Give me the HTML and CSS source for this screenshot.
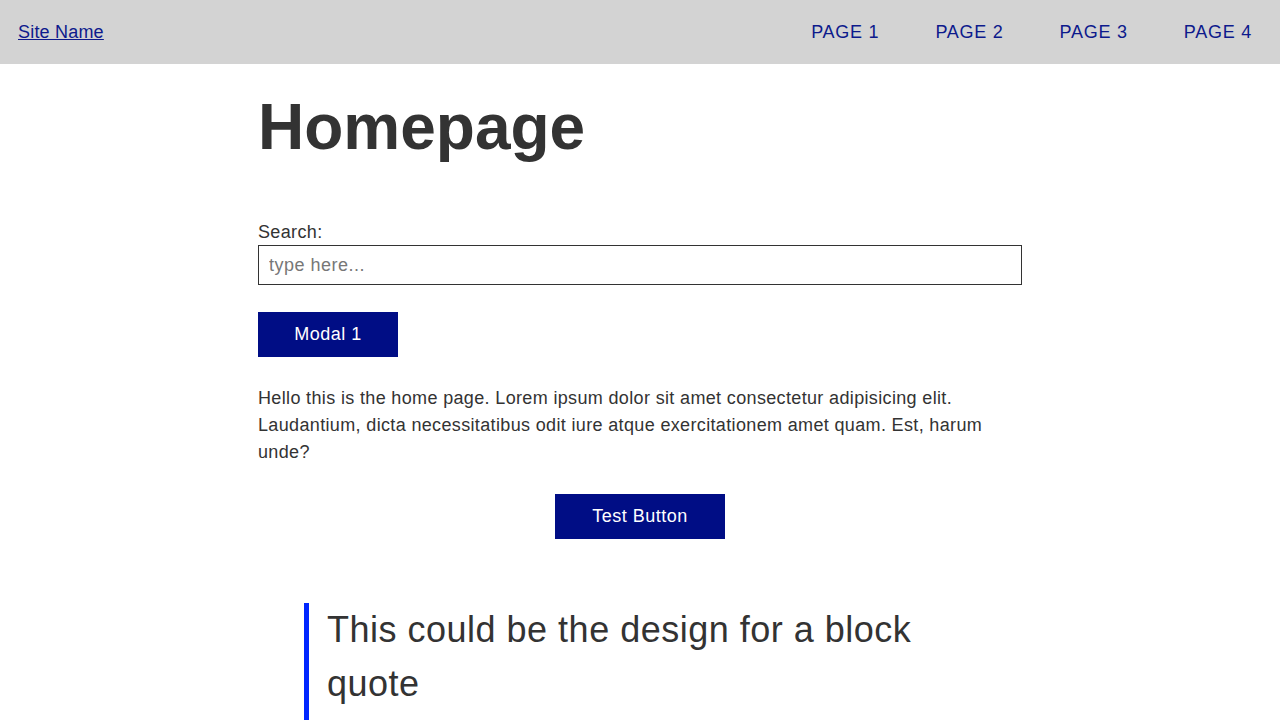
FILE: index.html
```html
<!DOCTYPE html>
<html lang="en">
<head>
<meta charset="utf-8">
<title>Homepage</title>
<link rel="stylesheet" href="styles.css">
</head>
<body>
<header class="site-header">
  <a class="site-name" href="#">Site Name</a>
  <nav class="site-nav">
    <a href="#">PAGE 1</a>
    <a href="#">PAGE 2</a>
    <a href="#">PAGE 3</a>
    <a href="#">PAGE 4</a>
  </nav>
</header>
<main class="content">
  <h1 class="title">Homepage</h1>
  <form class="search">
    <label class="search-label" for="q">Search:</label>
    <input class="search-input" id="q" type="text" placeholder="type here...">
  </form>
  <button class="btn" type="button">Modal 1</button>
  <p class="intro">Hello this is the home page. Lorem ipsum dolor sit amet consectetur adipisicing elit. Laudantium, dicta necessitatibus odit iure atque exercitationem amet quam. Est, harum unde?</p>
  <div class="center">
    <button class="btn btn-wide" type="button">Test Button</button>
  </div>
  <blockquote class="quote">This could be the design for a block quote</blockquote>
</main>
</body>
</html>
```

FILE: styles.css
```css
* { box-sizing: border-box; }
html, body {
  margin: 0;
  padding: 0;
}
body {
  font-family: "Liberation Sans", Arial, sans-serif;
  font-size: 18px;
  line-height: 1.5;
  letter-spacing: 0.35px;
  color: #333333;
  background: #ffffff;
}
.site-header {
  height: 64px;
  background: #d3d3d3;
  display: flex;
  align-items: center;
  justify-content: space-between;
  padding-left: 18px;
}
.site-name {
  color: #0d1a8c;
  font-size: 18px;
  letter-spacing: 0.2px;
  text-decoration: underline;
}
.site-nav {
  display: flex;
}
.site-nav a {
  color: #0d1a8c;
  text-decoration: none;
  font-size: 18px;
  letter-spacing: 0.75px;
  padding: 0 28px;
}
.content {
  width: 764px;
  margin: 0 auto;
  padding-top: 25px;
}
.title {
  margin: 0;
  font-size: 64px;
  line-height: 76px;
  font-weight: bold;
  letter-spacing: 0;
}
.search {
  display: flex;
  flex-direction: column;
  margin-top: 56px;
}
.search-label {
  line-height: 23px;
  margin-bottom: 1px;
}
.search-input {
  height: 40px;
  border: 1px solid #333333;
  padding: 0 10px;
  font-family: inherit;
  font-size: 18px;
  letter-spacing: 0.5px;
  color: #333333;
  outline: none;
}
.search-input::placeholder {
  color: #777777;
}
.btn {
  display: block;
  width: 140px;
  height: 45px;
  margin-top: 27px;
  border: none;
  background: #000d85;
  color: #ffffff;
  font-family: inherit;
  font-size: 18px;
  letter-spacing: 0.5px;
  cursor: pointer;
}
.intro {
  margin: 28px 0 0;
}
.center {
  display: flex;
  justify-content: center;
  margin-top: 28px;
}
.center .btn { margin-top: 0; }
.btn-wide { width: 170px; }
.quote {
  margin: 64px 46px 0;
  border-left: 5px solid #0026ff;
  padding: 0 0 24px 18px;
  font-size: 36px;
  line-height: 54px;
  letter-spacing: 0.5px;
}
```
